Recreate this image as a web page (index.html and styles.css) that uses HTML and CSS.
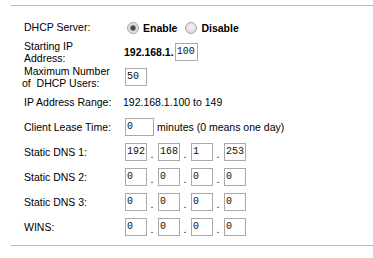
FILE: index.html
```html
<!DOCTYPE html>
<html>
<head>
  <meta charset="UTF-8">
  <title>DHCP Server Settings</title>
  <link rel="stylesheet" href="styles.css">
</head>
<body>
  <div class="settings">
    <div class="label">DHCP Server:</div>
    <div class="value first">
      <input type="radio" name="dhcp" class="radio" checked><b>Enable</b>
      <input type="radio" name="dhcp" class="radio off"><b>Disable</b>
    </div>

    <div class="label two">Starting IP<br>Address:</div>
    <div class="value"><b>192.168.1.</b><input type="text" class="box ip-end" value="100"></div>

    <div class="label two">Maximum Number<br><span class="pull">of&nbsp; DHCP Users:</span></div>
    <div class="value"><input type="text" class="box" value="50"></div>

    <div class="label">IP Address Range:</div>
    <div class="value plain">192.168.1.100 to 149</div>

    <div class="label">Client Lease Time:</div>
    <div class="value"><input type="text" class="box lease" value="0"><span class="note">minutes (0 means one day)</span></div>

    <div class="label">Static DNS 1:</div>
    <div class="value ip">
      <input type="text" class="box" value="192"><span class="dot">.</span><input type="text" class="box" value="168"><span class="dot">.</span><input type="text" class="box" value="1"><span class="dot">.</span><input type="text" class="box" value="253">
    </div>

    <div class="label">Static DNS 2:</div>
    <div class="value ip">
      <input type="text" class="box" value="0"><span class="dot">.</span><input type="text" class="box" value="0"><span class="dot">.</span><input type="text" class="box" value="0"><span class="dot">.</span><input type="text" class="box" value="0">
    </div>

    <div class="label">Static DNS 3:</div>
    <div class="value ip">
      <input type="text" class="box" value="0"><span class="dot">.</span><input type="text" class="box" value="0"><span class="dot">.</span><input type="text" class="box" value="0"><span class="dot">.</span><input type="text" class="box" value="0">
    </div>

    <div class="label">WINS:</div>
    <div class="value ip">
      <input type="text" class="box" value="0"><span class="dot">.</span><input type="text" class="box" value="0"><span class="dot">.</span><input type="text" class="box" value="0"><span class="dot">.</span><input type="text" class="box" value="0">
    </div>
  </div>
</body>
</html>
```

FILE: styles.css
```css
body {
  margin: 0;
  background: #fff;
  font-family: "Liberation Sans", Arial, sans-serif;
  font-size: 10.5px;
  color: #000;
}
.settings {
  margin: 5px 0 0 11px;
  padding: 8px 0 6px;
  border-top: 1px solid #b6b6e6;
  border-bottom: 1px solid #b6b6e6;
  display: grid;
  grid-template-columns: 113px 1fr;
  grid-auto-rows: 25px;
  align-items: center;
}
.label {
  padding-left: 13px;
  line-height: 12px;
}
.pull {
  margin-left: -2px;
}
.value {
  display: flex;
  align-items: center;
  white-space: nowrap;
}
.value.first {
  padding-top: 3px;
}
.value.plain {
  margin-left: -1px;
}
.radio {
  -webkit-appearance: none;
  appearance: none;
  width: 12px;
  height: 12px;
  margin: 0 4px 0 3px;
  border: 1px solid #a8a8a8;
  border-radius: 50%;
  background: radial-gradient(circle at 50% 40%, #f4f4f4 0%, #dcdcdc 70%, #cfcfcf 100%);
  position: relative;
}
.radio:checked {
  background: radial-gradient(circle, #4a4a4a 0 2px, #8a8a8a 2.6px, #dcdcdc 3.2px, #e8e8e8 100%);
}
.radio.off {
  margin-left: 8px;
}
.box {
  box-sizing: border-box;
  width: 22px;
  height: 18px;
  margin: 0;
  padding: 0 0 0 1px;
  border: 1px solid #a9a9a9;
  font-family: "Liberation Mono", "Courier New", monospace;
  font-size: 10px;
  color: #111;
  background: #fff;
}
.value > .box {
  margin-left: 1px;
}
.ip-end {
  width: 23px;
  margin-left: 1px;
}
.lease {
  width: 29px;
}
.note {
  margin-left: 3px;
}
.dot {
  width: 10px;
  text-align: center;
  align-self: flex-end;
  line-height: 14px;
}
```
